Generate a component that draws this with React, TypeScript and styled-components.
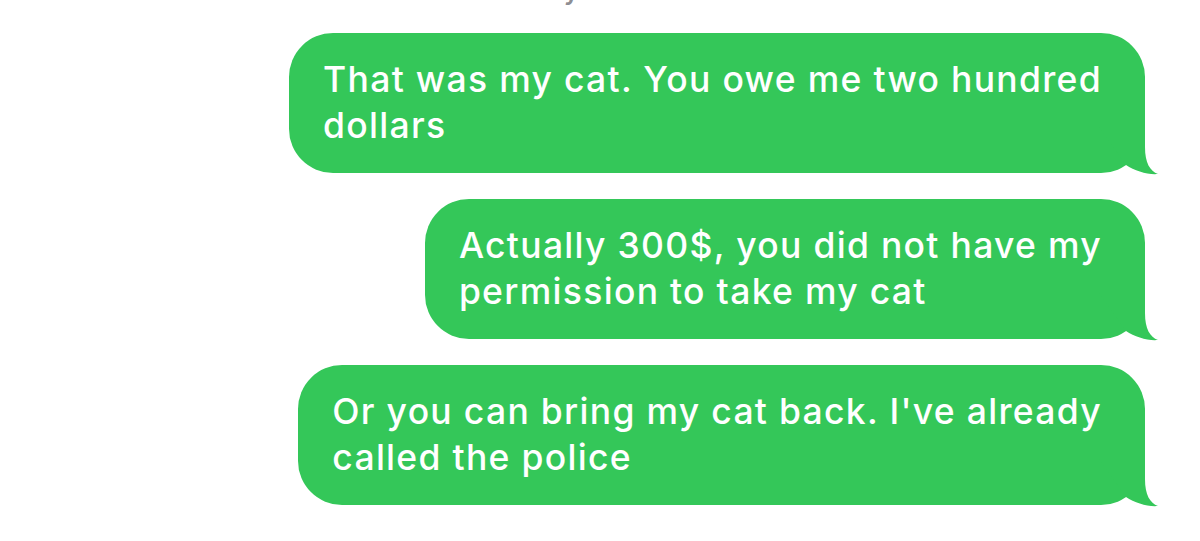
import * as React from 'react';
import styled, { createGlobalStyle } from 'styled-components';

const GlobalStyle = createGlobalStyle`
  html, body {
    margin: 0;
    padding: 0;
    background: #ffffff;
  }
  body {
    font-family: Inter, "Helvetica Neue", "Liberation Sans", Arial, sans-serif;
    -webkit-font-smoothing: antialiased;
  }
`;

const messages = [
  ['That was my cat. You owe me two hundred', 'dollars'],
  ['Actually 300$, you did not have my', 'permission to take my cat'],
  ["Or you can bring my cat back. I've already", 'called the police'],
];

export default function App() {
  return (
    <Screen>
      <GlobalStyle />
      <Thread>
        <Timestamp>
          <strong>Today</strong> 10:23 PM
        </Timestamp>
        {messages.map((lines, i) => (
          <Bubble key={i}>
            {lines.map((line) => (
              <Line key={line}>{line}</Line>
            ))}
            <Tail viewBox="-50 -50 66 54" aria-hidden="true">
              <path d="M0,-46 L0,-26 C0,-10 5,-2 13,1 C3,2 -10,-2 -19,-8 L-46,-46 Z" />
            </Tail>
          </Bubble>
        ))}
      </Thread>
    </Screen>
  );
}

const Screen = styled.main`
  width: 1200px;
  height: 541px;
  overflow: hidden;
  background: #fff;
`;

const Thread = styled.section`
  display: flex;
  flex-direction: column;
  align-items: flex-end;
  gap: 26px;
  padding-right: 55px;
`;

const Timestamp = styled.div`
  align-self: stretch;
  margin-top: -24px;
  margin-bottom: 1px;
  padding-left: 55px;
  text-align: center;
  font-size: 25px;
  line-height: 30px;
  color: #8e8e93;
  strong {
    font-weight: 600;
  }
`;

const Bubble = styled.div`
  position: relative;
  display: flex;
  flex-direction: column;
  padding: 24px 43px 24px 34px;
  border-radius: 44px;
  background: #34c759;
  color: #fff;
  font-size: 35.5px;
  line-height: 46px;
  font-weight: 500;
  letter-spacing: 1.3px;
`;

const Line = styled.span`
  white-space: nowrap;
`;

const Tail = styled.svg`
  position: absolute;
  right: -16px;
  bottom: -4px;
  width: 66px;
  height: 54px;
  fill: #34c759;
`;
